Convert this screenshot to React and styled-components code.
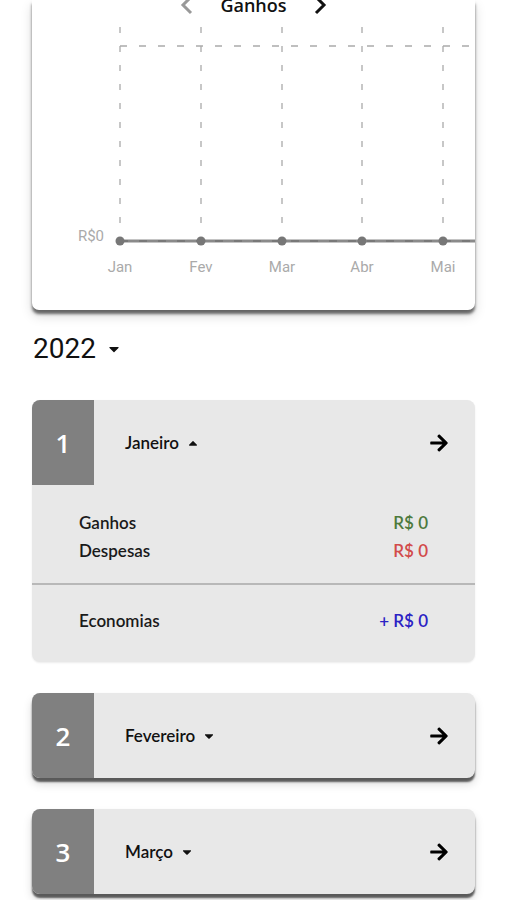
import React from "react";
import styled, { createGlobalStyle } from "styled-components";
import { FaArrowRight, FaCaretDown, FaCaretUp } from "react-icons/fa";

const GlobalStyle = createGlobalStyle`
  html, body {
    margin: 0;
    padding: 0;
    background: #ffffff;
    font-family: Lato, "Noto Sans", sans-serif;
  }
`;

const Page = styled.div`
  width: 507px;
  padding: 0 32px;
  box-sizing: border-box;
  overflow: hidden;
`;

const ChartCard = styled.div`
  background: #ffffff;
  border-radius: 0 0 7px 7px;
  box-shadow: 0 4px 3px rgba(0, 0, 0, 0.55), 0 6px 12px rgba(0, 0, 0, 0.15);
  overflow: hidden;
`;

const ChartHeader = styled.div`
  height: 44px;
  margin-top: -17px;
  display: flex;
  align-items: center;
  justify-content: center;
  gap: 26px;
`;

const ChartTitle = styled.span`
  font-family: "Open Sans", sans-serif;
  font-size: 18px;
  font-weight: 600;
  color: #111;
`;

const NavIcon = styled.svg`
  width: 14px;
  height: 20px;
  display: block;
`;

const YearRow = styled.div`
  display: flex;
  align-items: center;
  gap: 10px;
  margin: 22px 0 34px 1px;
  font-family: Roboto, "Liberation Sans", sans-serif;
  font-size: 28px;
  color: #111;
  line-height: 34px;
`;

const Card = styled.div`
  background: #e8e8e8;
  border-radius: 8px;
  overflow: hidden;
  margin-bottom: ${(p) => p.$gap}px;
  box-shadow: ${(p) =>
    p.$open
      ? "0 1px 2px rgba(0,0,0,0.08)"
      : "0 4px 2px rgba(0,0,0,0.6), 0 6px 10px rgba(0,0,0,0.15)"};
`;

const CardHead = styled.div`
  height: 85px;
  display: flex;
  align-items: center;
`;

const Index = styled.div`
  width: 62px;
  height: 100%;
  background: #808080;
  color: #ffffff;
  font-size: 26px;
  font-weight: 600;
  display: flex;
  align-items: center;
  justify-content: center;
  font-family: "Open Sans", sans-serif;
`;

const MonthName = styled.div`
  flex: 1;
  display: flex;
  align-items: center;
  gap: 7px;
  padding-left: 31px;
  font-size: 17px;
  font-weight: 600;
  color: #111;
`;

const Go = styled.div`
  padding-right: 26px;
  display: flex;
  align-items: center;
  color: #000;
`;

const Body = styled.div`
  padding: 23px 47px 19px;
`;

const Line = styled.div`
  display: flex;
  justify-content: space-between;
  align-items: center;
  height: 28px;
  font-size: 17px;
  font-weight: 600;
  color: #1a1a1a;
`;

const Value = styled.span`
  color: ${(p) => p.$color};
`;

const Divider = styled.div`
  height: 2px;
  background: #b8b8b8;
`;

const Footer = styled.div`
  padding: 21px 47px 28px;
`;

const months = ["Jan", "Fev", "Mar", "Abr", "Mai"];
const gridX = [88, 169, 250, 330, 411];

function Chart() {
  return (
    <svg width="443" height="283" viewBox="0 0 443 283" style={{ display: "block" }}>
      {gridX.map((x) => (
        <line key={x} x1={x} y1={0} x2={x} y2={206} stroke="#aaa" strokeWidth="1.3" strokeDasharray="6 13" />
      ))}
      <line x1={88} y1={19} x2={443} y2={19} stroke="#aaa" strokeWidth="1.3" strokeDasharray="7 12" />
      <line x1={88} y1={214} x2={443} y2={214} stroke="#8a8a8a" strokeWidth="3" />
      <line x1={88} y1={214} x2={443} y2={214} stroke="#666" strokeWidth="1.2" strokeDasharray="8 11" />
      {gridX.map((x) => (
        <circle key={x} cx={x} cy={214} r="4.5" fill="#777" />
      ))}
      <text x={72} y={214} textAnchor="end" fontSize="15" fill="#aaa" fontFamily="Roboto, sans-serif">
        R$0
      </text>
      {months.map((m, i) => (
        <text key={m} x={gridX[i]} y={245} textAnchor="middle" fontSize="15" fill="#aaa" fontFamily="Roboto, sans-serif">
          {m}
        </text>
      ))}
    </svg>
  );
}

function MonthCard({ n, name, open, gap }) {
  return (
    <Card $open={open} $gap={gap}>
      <CardHead>
        <Index>{n}</Index>
        <MonthName>
          {name}
          {open ? <FaCaretUp size={14} /> : <FaCaretDown size={14} />}
        </MonthName>
        <Go>
          <FaArrowRight size={20} />
        </Go>
      </CardHead>
      {open && (
        <>
          <Body>
            <Line>
              Ganhos <Value $color="#4d7a3d">R$ 0</Value>
            </Line>
            <Line>
              Despesas <Value $color="#d24b4b">R$ 0</Value>
            </Line>
          </Body>
          <Divider />
          <Footer>
            <Line>
              Economias <Value $color="#2b22c4">+ R$ 0</Value>
            </Line>
          </Footer>
        </>
      )}
    </Card>
  );
}

export default function App() {
  return (
    <Page>
      <GlobalStyle />
      <ChartCard>
        <ChartHeader>
          <NavIcon viewBox="0 0 14 20">
            <polyline points="11,2 3,10 11,18" fill="none" stroke="#999" strokeWidth="3" />
          </NavIcon>
          <ChartTitle>Ganhos</ChartTitle>
          <NavIcon viewBox="0 0 14 20">
            <polyline points="3,2 11,10 3,18" fill="none" stroke="#111" strokeWidth="3" />
          </NavIcon>
        </ChartHeader>
        <Chart />
      </ChartCard>
      <YearRow>
        2022 <FaCaretDown size={16} />
      </YearRow>
      <MonthCard n="1" name="Janeiro" open gap={31} />
      <MonthCard n="2" name="Fevereiro" gap={31} />
      <MonthCard n="3" name="Março" gap={20} />
    </Page>
  );
}
